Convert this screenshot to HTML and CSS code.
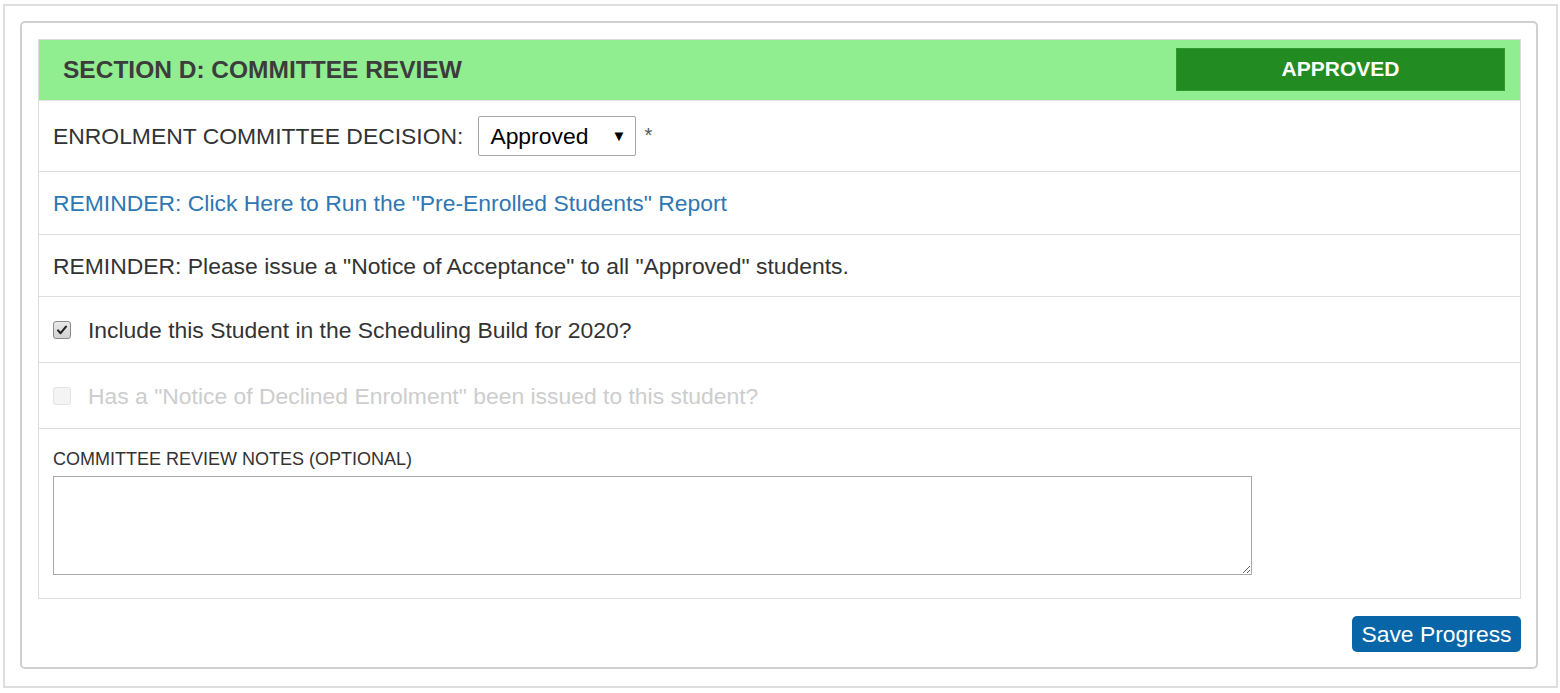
FILE: index.html
```html
<!DOCTYPE html>
<html>
<head>
<meta charset="utf-8">
<link rel="stylesheet" href="styles.css">
</head>
<body>
<div class="frame">
  <div class="card">
    <div class="panel">
      <div class="panel-head">
        <h2 class="title">SECTION D: COMMITTEE REVIEW</h2>
        <div class="badge">APPROVED</div>
      </div>
      <div class="row row-select">
        <span class="label-text">ENROLMENT COMMITTEE DECISION:</span>
        <div class="select-wrap">
          <select class="select">
            <option>Approved</option>
            <option>Declined</option>
            <option>Pending</option>
          </select>
          <span class="select-arrow">&#9660;</span>
        </div>
        <span class="req">*</span>
      </div>
      <div class="row row-text row-link">
        <a class="link" href="#">REMINDER: Click Here to Run the "Pre-Enrolled Students" Report</a>
      </div>
      <div class="row row-text">
        <span>REMINDER: Please issue a "Notice of Acceptance" to all "Approved" students.</span>
      </div>
      <div class="row row-check">
        <span class="cb cb-checked">
          <svg viewBox="0 0 12 12" width="12" height="12"><path d="M2 6.4 L4.6 9.2 L10 2.6" fill="none" stroke="#222" stroke-width="2.1" stroke-linecap="round" stroke-linejoin="round"/></svg>
        </span>
        <span class="check-label">Include this Student in the Scheduling Build for 2020?</span>
      </div>
      <div class="row row-check disabled">
        <span class="cb cb-disabled"></span>
        <span class="check-label">Has a "Notice of Declined Enrolment" been issued to this student?</span>
      </div>
      <div class="row row-notes">
        <label class="notes-label">COMMITTEE REVIEW NOTES (OPTIONAL)</label>
        <textarea class="notes"></textarea>
      </div>
    </div>
    <div class="actions">
      <button class="btn-save">Save Progress</button>
    </div>
  </div>
</div>
</body>
</html>
```
FILE: styles.css
```css
html, body {
  margin: 0;
  padding: 0;
  background: #fff;
}
body {
  font-family: "Liberation Sans", Arial, sans-serif;
  color: #333;
}
.frame {
  margin: 4px 0 0 3px;
  width: 1536px;
  height: 665px;
  border: 2px solid #dedede;
  padding: 15px 0 0 15px;
}
.card {
  width: 1483px;
  border: 2px solid #d0d0d0;
  border-radius: 5px;
  padding: 16px 15px 15px 16px;
}
.panel {
  border: 1px solid #dcdcdc;
}
.panel-head {
  background: #90ee90;
  height: 60px;
  display: flex;
  align-items: flex-start;
  justify-content: space-between;
  border-bottom: 1px solid #e4e4e4;
}
.title {
  margin: 0;
  padding-left: 24px;
  font-size: 24.5px;
  font-weight: bold;
  color: #3c3c3c;
  line-height: 60px;
}
.badge {
  margin: 8px 15px 0 0;
  width: 327px;
  height: 41px;
  background: #228b22;
  border: 1px solid #2e9a2e;
  color: #fff;
  font-weight: bold;
  font-size: 21px;
  line-height: 40px;
  text-align: center;
}
.row {
  display: flex;
  align-items: center;
  padding: 0 14px;
  border-bottom: 1px solid #dedede;
  font-size: 22.9px;
  line-height: 26px;
}
.row-select {
  padding-top: 15px;
  padding-bottom: 15px;
}
.label-text {
  color: #333;
}
.select-wrap {
  position: relative;
  margin-left: 15px;
}
.select {
  appearance: none;
  -webkit-appearance: none;
  width: 158px;
  height: 40px;
  border: 1px solid #a6a6a6;
  border-radius: 2px;
  background: #fff;
  font-family: "Liberation Sans", Arial, sans-serif;
  font-size: 22.9px;
  color: #000;
  padding: 0 0 0 11px;
  display: block;
}
.select-arrow {
  position: absolute;
  right: 10px;
  top: 11px;
  font-size: 15px;
  line-height: 18px;
  color: #000;
  pointer-events: none;
}
.req {
  margin-left: 8px;
  color: #555;
  font-size: 20px;
  align-self: flex-start;
  margin-top: 6px;
}
.row-text {
  padding-top: 18px;
  padding-bottom: 17px;
}
.row-link {
  padding-top: 18px;
  padding-bottom: 18px;
}
.link {
  color: #2f77b3;
  text-decoration: none;
}
.row-check {
  padding-top: 20px;
  padding-bottom: 19px;
}
.cb {
  width: 18px;
  height: 18px;
  border-radius: 3px;
  box-sizing: border-box;
  display: flex;
  align-items: center;
  justify-content: center;
  margin-right: 17px;
  flex: none;
}
.cb-checked {
  border: 1px solid #8a8a8a;
  background: linear-gradient(#e8e8e8, #d2d2d2);
}
.cb-disabled {
  border: 1px solid #e2e2e2;
  background: #f4f4f4;
}
.disabled .check-label {
  color: #cdcdcd;
}
.row-notes {
  flex-direction: column;
  align-items: flex-start;
  padding-top: 19px;
  padding-bottom: 23px;
  border-bottom: none;
}
.notes-label {
  font-size: 18px;
  line-height: 22px;
  color: #333;
  margin-bottom: 6px;
}
.notes {
  width: 1199px;
  height: 99px;
  box-sizing: border-box;
  border: 1px solid #a9a9a9;
  margin: 0;
  font-family: "Liberation Sans", Arial, sans-serif;
  font-size: 16px;
}
.actions {
  display: flex;
  justify-content: flex-end;
  margin-top: 17px;
}
.btn-save {
  background: #0866a8;
  color: #fff;
  border: none;
  border-radius: 5px;
  width: 169px;
  height: 36px;
  padding: 0;
  font-family: "Liberation Sans", Arial, sans-serif;
  font-size: 22.9px;
  line-height: 36px;
}
```
